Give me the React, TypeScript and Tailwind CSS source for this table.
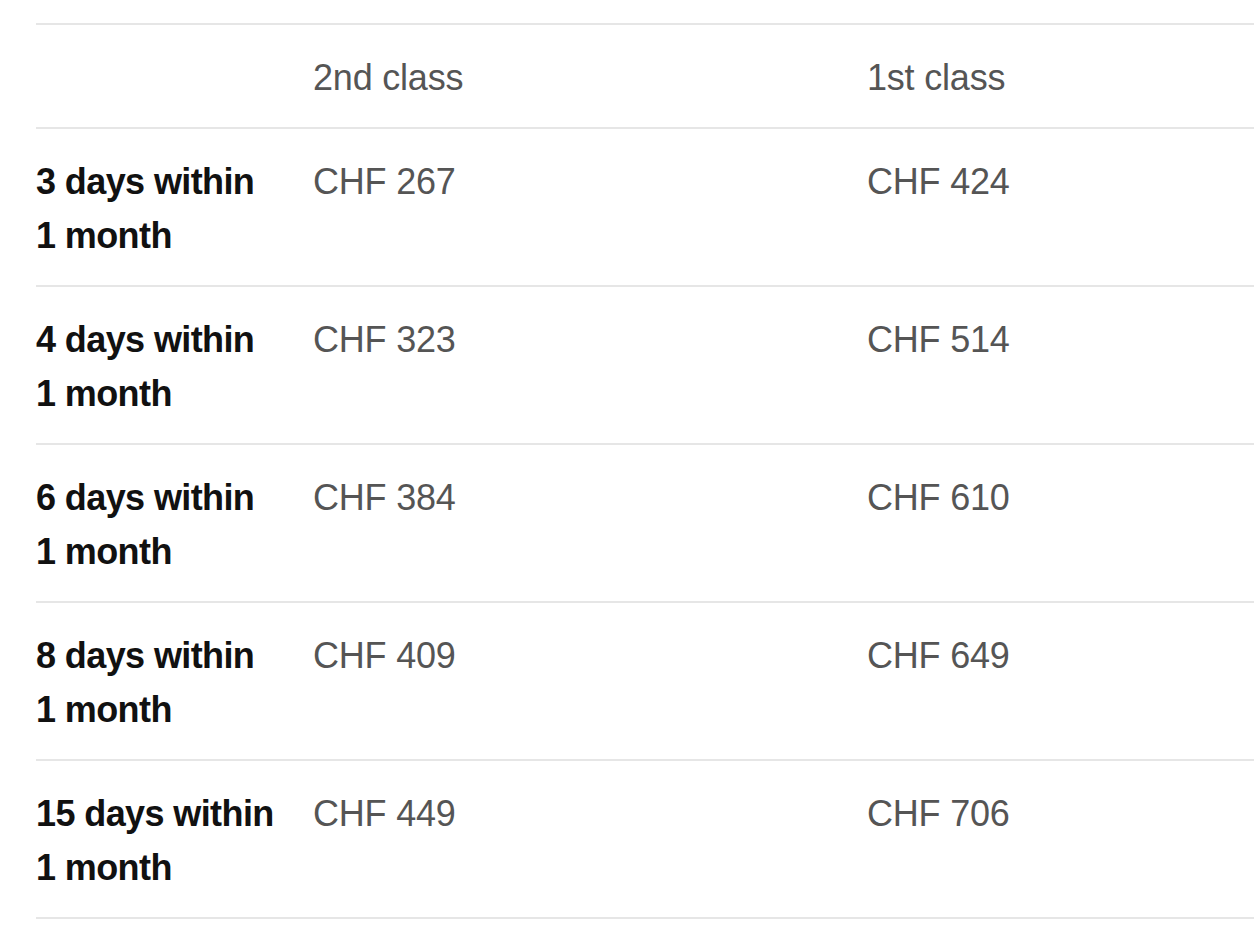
const rows = [
  { days: "3 days within", second: "CHF 267", first: "CHF 424" },
  { days: "4 days within", second: "CHF 323", first: "CHF 514" },
  { days: "6 days within", second: "CHF 384", first: "CHF 610" },
  { days: "8 days within", second: "CHF 409", first: "CHF 649" },
  { days: "15 days within", second: "CHF 449", first: "CHF 706" },
]

export default function App() {
  return (
    <div className="min-h-screen bg-white pl-[36px] pt-[23px] font-['Liberation_Sans',Arial,sans-serif] text-[36px] leading-[54px]">
      <div className="grid grid-cols-[277px_554px_1fr] border-t-2 border-[#e6e6e6] pt-[26px] pb-[22px] text-[#555555] tracking-[-0.2px]">
        <div></div>
        <div>2nd class</div>
        <div>1st class</div>
      </div>
      {rows.map((r) => (
        <div
          key={r.days}
          className="grid grid-cols-[277px_554px_1fr] border-t-2 border-[#e6e6e6] pt-[26px] pb-[22px] last:border-b-2"
        >
          <div className="font-bold tracking-[-0.6px] text-[#111111]">
            {r.days}
            <br />1 month
          </div>
          <div className="text-[#555555] tracking-[-0.2px]">{r.second}</div>
          <div className="text-[#555555] tracking-[-0.2px]">{r.first}</div>
        </div>
      ))}
    </div>
  )
}
